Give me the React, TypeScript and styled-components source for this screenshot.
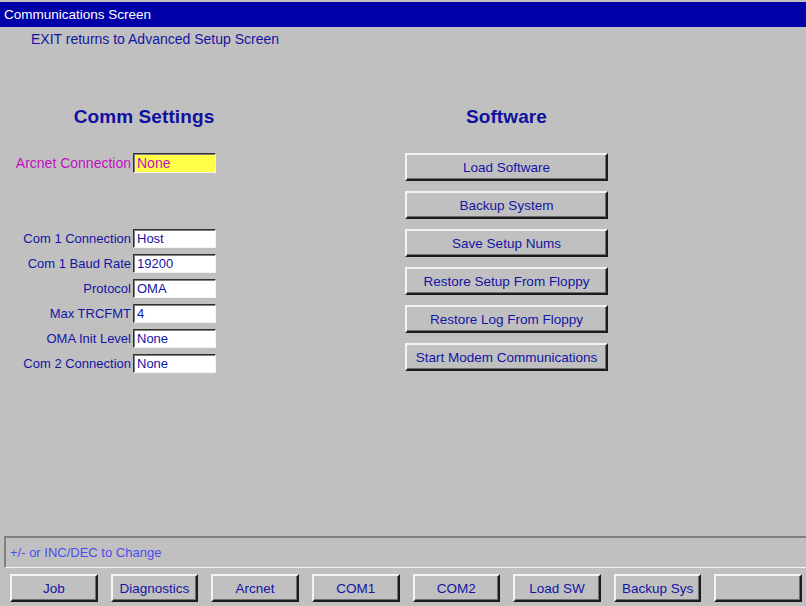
import React from "react";
import styled, { createGlobalStyle } from "styled-components";

const GlobalStyle = createGlobalStyle`
  html, body {
    margin: 0;
    padding: 0;
    background: #c0c0c0;
    overflow: hidden;
  }
  * {
    box-sizing: border-box;
  }
`;

const Screen = styled.div`
  display: flex;
  flex-direction: column;
  width: 806px;
  height: 606px;
  padding-top: 2px;
  background: #c0c0c0;
  font-family: "Liberation Sans", Arial, sans-serif;
  font-size: 13px;
  color: #1414a4;
`;

const TitleBar = styled.div`
  height: 25px;
  padding-left: 4px;
  display: flex;
  align-items: center;
  background: #0000a8;
  color: #ffffff;
  font-size: 13.5px;
`;

const Subtitle = styled.div`
  padding: 4px 0 0 31px;
  height: 22px;
  line-height: 17px;
  font-size: 14px;
`;

const Main = styled.div`
  flex: 1;
  display: flex;
  padding-top: 56px;
`;

const Column = styled.div<{ $width: number; $offset?: number }>`
  width: ${(p) => p.$width}px;
  margin-left: ${(p) => p.$offset ?? 0}px;
  display: flex;
  flex-direction: column;
`;

const Heading = styled.h2`
  margin: 0 0 24px;
  height: 24px;
  line-height: 24px;
  text-align: center;
  font-size: 19px;
  font-weight: bold;
  letter-spacing: 0.1px;
  color: #1010a0;
`;

const FieldGrid = styled.div<{ $gap: number }>`
  display: grid;
  grid-template-columns: 131px 83px;
  column-gap: 2px;
  row-gap: ${(p) => p.$gap}px;
  align-items: center;
  margin-bottom: ${(p) => (p.$gap === 0 ? 56 : 0)}px;
`;

const Label = styled.div<{ $alert?: boolean }>`
  text-align: right;
  white-space: nowrap;
  font-size: ${(p) => (p.$alert ? 14 : 13)}px;
  color: ${(p) => (p.$alert ? "#c010c0" : "#1414a4")};
`;

const Field = styled.div<{ $alert?: boolean }>`
  height: ${(p) => (p.$alert ? 20 : 19)}px;
  padding: 0 3px;
  line-height: ${(p) => (p.$alert ? 18 : 17)}px;
  white-space: nowrap;
  overflow: hidden;
  background: ${(p) => (p.$alert ? "#ffff48" : "#ffffff")};
  color: ${(p) => (p.$alert ? "#c010c0" : "#1414a4")};
  font-size: ${(p) => (p.$alert ? 14 : 13)}px;
  border-style: solid;
  border-width: 1px;
  border-color: #303030 #f4f4f4 #f4f4f4 #303030;
  box-shadow: inset 1px 1px #808080;
`;

const ButtonStack = styled.div`
  display: flex;
  flex-direction: column;
  gap: 10px;
`;

const RaisedButton = styled.button`
  height: 28px;
  padding: 0;
  background: #c0c0c0;
  font-family: inherit;
  font-size: 13.5px;
  color: #1414a4;
  border-style: solid;
  border-width: 2px;
  border-color: #f4f4f4 #1c1c1c #1c1c1c #f4f4f4;
  box-shadow: inset -1px -1px #707070;
  white-space: nowrap;
  cursor: pointer;
`;

const StatusBar = styled.div`
  height: 32px;
  margin-left: 4px;
  padding-left: 4px;
  display: flex;
  align-items: center;
  color: #4c4cee;
  border-top: 2px solid #808080;
  border-left: 2px solid #808080;
  border-bottom: 1px solid #f4f4f4;
`;

const Footer = styled.div`
  display: grid;
  grid-template-columns: repeat(8, 1fr);
  column-gap: 13px;
  padding: 6px 4px 4px 10px;
`;

const commFields = [
  { label: "Com 1 Connection", value: "Host" },
  { label: "Com 1 Baud Rate", value: "19200" },
  { label: "Protocol", value: "OMA" },
  { label: "Max TRCFMT", value: "4" },
  { label: "OMA Init Level", value: "None" },
  { label: "Com 2 Connection", value: "None" },
];

const softwareActions = [
  "Load Software",
  "Backup System",
  "Save Setup Nums",
  "Restore Setup From Floppy",
  "Restore Log From Floppy",
  "Start Modem Communications",
];

const softKeys = ["Job", "Diagnostics", "Arcnet", "COM1", "COM2", "Load SW", "Backup Sys", ""];

export default function App() {
  return (
    <>
      <GlobalStyle />
      <Screen>
        <TitleBar>Communications Screen</TitleBar>
        <Subtitle>EXIT returns to Advanced Setup Screen</Subtitle>
        <Main>
          <Column $width={288}>
            <Heading>Comm Settings</Heading>
            <FieldGrid $gap={0}>
              <Label $alert>Arcnet Connection</Label>
              <Field $alert>None</Field>
            </FieldGrid>
            <FieldGrid $gap={6}>
              {commFields.map((f) => (
                <React.Fragment key={f.label}>
                  <Label>{f.label}</Label>
                  <Field>{f.value}</Field>
                </React.Fragment>
              ))}
            </FieldGrid>
          </Column>
          <Column $width={203} $offset={117}>
            <Heading>Software</Heading>
            <ButtonStack>
              {softwareActions.map((a) => (
                <RaisedButton key={a}>{a}</RaisedButton>
              ))}
            </ButtonStack>
          </Column>
        </Main>
        <StatusBar>+/- or INC/DEC to Change</StatusBar>
        <Footer>
          {softKeys.map((k, i) => (
            <RaisedButton key={i}>{k}</RaisedButton>
          ))}
        </Footer>
      </Screen>
    </>
  );
}
